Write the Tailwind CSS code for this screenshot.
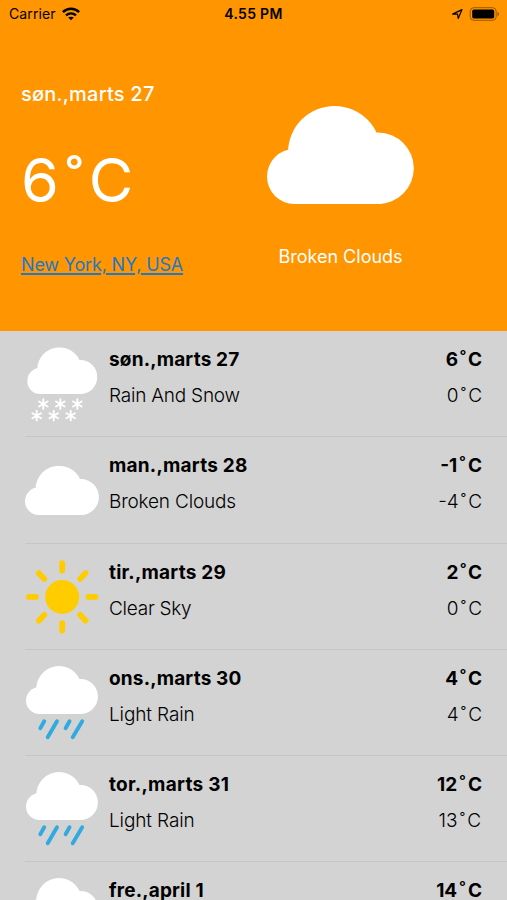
<!DOCTYPE html>
<html lang="da">
<head>
    <meta charset="UTF-8">
    <meta name="viewport" content="width=device-width, initial-scale=1.0">
    <title>Weather</title>
    <script src="https://cdn.jsdelivr.net/npm/@tailwindcss/browser@4"></script>
</head>
<body class="flex h-screen flex-col overflow-hidden bg-[#d3d3d3] font-['Inter',sans-serif] text-black">
    <!-- Shared weather icons -->
    <svg class="hidden">
        <symbol id="cloud" viewBox="0 0 147 98">
            <g fill="#fff">
                <circle cx="27.5" cy="70.5" r="27.5"/>
                <circle cx="67.5" cy="46.5" r="46.5"/>
                <circle cx="111" cy="62.3" r="35.8"/>
                <path d="M27.5 50H111V98H27.5z"/>
            </g>
        </symbol>
        <symbol id="flake" viewBox="-6 -6 12 12">
            <path d="M0-4.9V4.9M-4.3-2.5L4.3 2.5M-4.3 2.5L4.3-2.5" stroke="#fff" stroke-width="1.9" stroke-linecap="round"/>
        </symbol>
        <symbol id="snow" viewBox="0 0 74 106">
            <use href="#cloud" x="2.2" y="16.2" width="70.2" height="47"/>
            <use href="#flake" x="12.3" y="67" width="12" height="12"/>
            <use href="#flake" x="29.3" y="67" width="12" height="12"/>
            <use href="#flake" x="46.3" y="67" width="12" height="12"/>
            <use href="#flake" x="5.7" y="78.7" width="12" height="12"/>
            <use href="#flake" x="22.7" y="78.7" width="12" height="12"/>
            <use href="#flake" x="39.7" y="78.7" width="12" height="12"/>
        </symbol>
        <symbol id="broken" viewBox="0 0 74 106">
            <use href="#cloud" x="0" y="28.7" width="74" height="49.3"/>
        </symbol>
        <symbol id="sun" viewBox="0 0 74 106">
            <g transform="translate(37.2 52.9)" stroke="#ffcc00" stroke-width="5.8" stroke-linecap="round">
                <circle r="17" fill="#ffcc00" stroke="none"/>
                <path d="M0-26.3V-33.7M0 26.3V33.7M-26.3 0H-33.2M26.3 0H33.2M-18-18L-23.3-23.8M18-18L23.3-23.8M-18 18L-23.3 23.8M18 18L23.3 23.8"/>
            </g>
        </symbol>
        <symbol id="rain" viewBox="0 0 74 106">
            <use href="#cloud" x="1" y="16" width="72" height="48"/>
            <path d="M19.2 71.3L15.3 78.2M32 71.3L22.7 87.3M44.5 71.3L40.6 78.2M57.2 71.3L47.7 87.3" stroke="#32aadf" stroke-width="3.9" stroke-linecap="round"/>
        </symbol>
    </svg>

    <!-- Current weather -->
    <header class="flex h-[331px] shrink-0 flex-col bg-[#ff9500]">
        <div class="grid h-7 grid-cols-3 items-center px-2 text-sm">
            <div class="flex items-center gap-1.5 pl-px">
                <span class="tracking-[0.1px]">Carrier</span>
                <svg class="h-[14px] w-[18px]" viewBox="0 0 18 14" fill="none" stroke="#000" stroke-width="2.5">
                    <path d="M.9 5.1C5.6.6 12.4.6 17.1 5.1"/>
                    <path d="M4 8.4C7 5.8 11 5.8 14 8.4"/>
                    <path d="M9 13.3L6.2 10.6C7.8 9.3 10.2 9.3 11.8 10.6z" fill="#000" stroke="none"/>
                </svg>
            </div>
            <div class="text-center font-semibold tracking-[0.3px]">4.55 PM</div>
            <div class="flex items-center justify-end gap-1.5">
                <svg class="h-3 w-3" viewBox="0 0 12 12" fill="none" stroke="#000" stroke-width="1.2" stroke-linejoin="round">
                    <path d="M1.6 6.1L11 1.6L7.2 10.4L6.6 6.2z"/>
                </svg>
                <svg class="h-[14px] w-[30px]" viewBox="0 0 30 14">
                    <rect x="1.2" y=".7" width="26" height="12.6" rx="3.6" fill="none" stroke="#000" stroke-opacity=".4"/>
                    <rect x="3.2" y="2.6" width="22" height="8.8" rx="1.6"/>
                    <path d="M28.5 5v4.2q1.5-.7 1.5-2.1T28.5 5z" fill-opacity=".45"/>
                </svg>
            </div>
        </div>
        <main class="flex flex-1 text-white">
            <div class="flex w-[200px] flex-col items-start pl-[21px]">
                <span class="mt-[54px] text-[20px] leading-6 font-medium tracking-[0.22px] whitespace-nowrap">søn.,marts 27</span>
                <span class="mt-[38px] text-[61px] leading-[72px] whitespace-nowrap">6<span class="mr-[6px] ml-[7px] text-[57px]">˚</span>C</span>
                <a href="#" class="mt-[35px] text-[18px] leading-6 tracking-[-0.18px] whitespace-nowrap text-[#2378c8] underline decoration-[1.5px] underline-offset-[2px]">New York, NY, USA</a>
            </div>
            <div class="flex flex-1 flex-col items-center pr-[26px]">
                <svg class="mt-[77.5px] h-[98px] w-[147px]"><use href="#cloud"/></svg>
                <span class="mt-[41.5px] text-[18px] leading-6">Broken Clouds</span>
            </div>
        </main>
    </header>

    <!-- Forecast -->
    <ul class="ml-[25px] min-h-0 flex-1 overflow-hidden text-[19px] leading-6">
        <li class="flex h-[106.3px] gap-[10px] border-b border-[#c6c6c7] pr-[25px]">
            <svg class="h-[106px] w-[74px] shrink-0"><use href="#snow"/></svg>
            <div class="flex flex-1 flex-col gap-3 pt-[17px]"><b class="font-bold tracking-[0.17px]">søn.,marts 27</b><span class="font-light tracking-[-0.22px]">Rain And Snow</span></div>
            <div class="flex flex-col gap-3 pt-[17px] text-right"><b class="font-bold">6<span class="mx-[1.5px]">˚</span>C</b><span class="font-light">0<span class="mx-[2.2px]">˚</span>C</span></div>
        </li>
        <li class="flex h-[106.3px] gap-[10px] border-b border-[#c6c6c7] pr-[25px]">
            <svg class="h-[106px] w-[74px] shrink-0"><use href="#broken"/></svg>
            <div class="flex flex-1 flex-col gap-3 pt-[17px]"><b class="font-bold tracking-[0.22px]">man.,marts 28</b><span class="font-light tracking-[-0.18px]">Broken Clouds</span></div>
            <div class="flex flex-col gap-3 pt-[17px] text-right"><b class="font-bold">-1<span class="mx-[1.9px]">˚</span>C</b><span class="font-light">-4<span class="mx-[2.1px]">˚</span>C</span></div>
        </li>
        <li class="flex h-[106.3px] gap-[10px] border-b border-[#c6c6c7] pr-[25px]">
            <svg class="h-[106px] w-[74px] shrink-0"><use href="#sun"/></svg>
            <div class="flex flex-1 flex-col gap-3 pt-[17px]"><b class="font-bold tracking-[0.23px]">tir.,marts 29</b><span class="font-light tracking-[-0.25px]">Clear Sky</span></div>
            <div class="flex flex-col gap-3 pt-[17px] text-right"><b class="font-bold">2<span class="mx-[1.3px]">˚</span>C</b><span class="font-light">0<span class="mx-[2.2px]">˚</span>C</span></div>
        </li>
        <li class="flex h-[106.3px] gap-[10px] border-b border-[#c6c6c7] pr-[25px]">
            <svg class="h-[106px] w-[74px] shrink-0"><use href="#rain"/></svg>
            <div class="flex flex-1 flex-col gap-3 pt-[17px]"><b class="font-bold tracking-[0.17px]">ons.,marts 30</b><span class="font-light tracking-[-0.12px]">Light Rain</span></div>
            <div class="flex flex-col gap-3 pt-[17px] text-right"><b class="font-bold">4<span class="mx-[1.5px]">˚</span>C</b><span class="font-light">4<span class="mx-[2.1px]">˚</span>C</span></div>
        </li>
        <li class="flex h-[106.3px] gap-[10px] border-b border-[#c6c6c7] pr-[25px]">
            <svg class="h-[106px] w-[74px] shrink-0"><use href="#rain"/></svg>
            <div class="flex flex-1 flex-col gap-3 pt-[17px]"><b class="font-bold tracking-[0.28px]">tor.,marts 31</b><span class="font-light tracking-[-0.12px]">Light Rain</span></div>
            <div class="flex flex-col gap-3 pt-[17px] text-right"><b class="font-bold">12<span class="mx-[1.9px]">˚</span>C</b><span class="pr-px font-light">13<span class="mx-[2.2px]">˚</span>C</span></div>
        </li>
        <li class="flex h-[37.5px] gap-[10px] overflow-hidden pr-[25px]">
            <svg class="h-[106px] w-[74px] shrink-0"><use href="#rain"/></svg>
            <div class="flex-1 pt-[17px]"><b class="font-bold tracking-[0.17px]">fre.,april 1</b></div>
            <div class="pt-[17px] text-right"><b class="font-bold">14<span class="mx-[1.9px]">˚</span>C</b></div>
        </li>
    </ul>
</body>
</html>
